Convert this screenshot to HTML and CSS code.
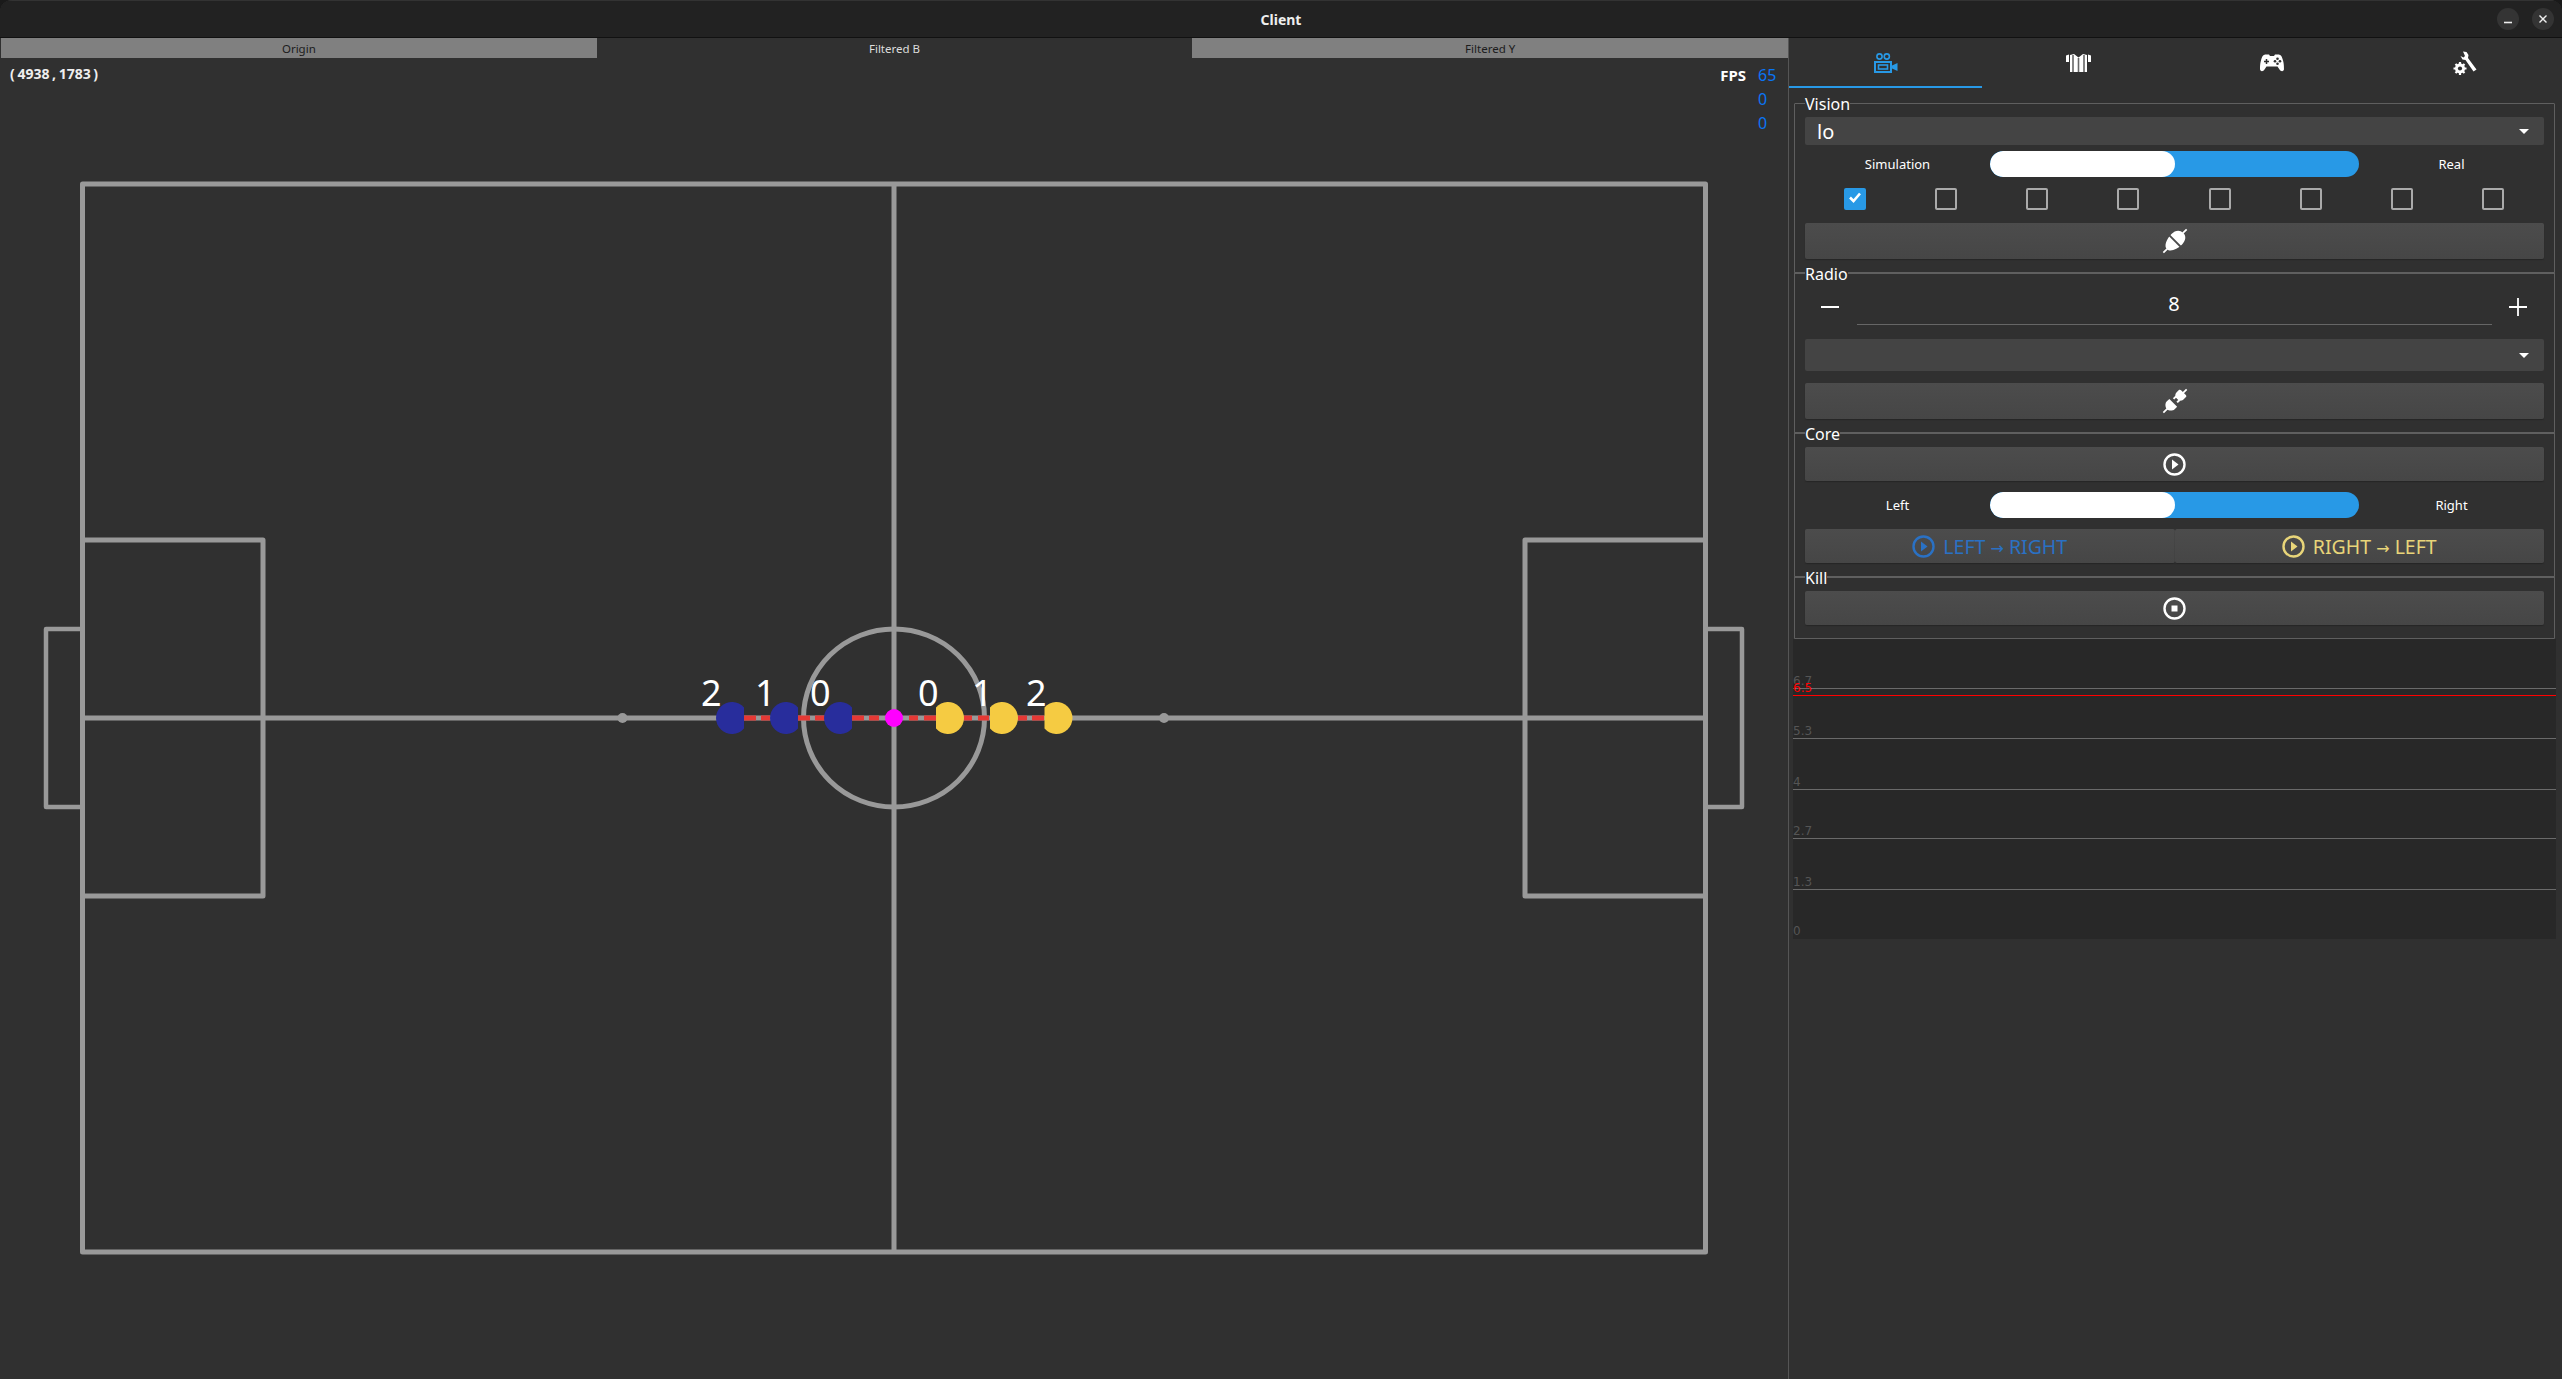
FILE: index.html
```html
<!DOCTYPE html>
<html lang="en">
<head>
<meta charset="utf-8">
<title>Client</title>
<link rel="stylesheet" href="styles.css">
</head>
<body>
<div class="window">
  <header class="titlebar">
    <span class="title">Client</span>
    <div class="win-buttons">
      <span class="win-btn"><svg width="22" height="22" viewBox="0 0 22 22"><path d="M7 14.500h8" stroke="#eee" stroke-width="1.600"/></svg></span>
      <span class="win-btn"><svg width="22" height="22" viewBox="0 0 22 22"><path d="M7.500 7.500l7 7M14.500 7.500l-7 7" stroke="#eee" stroke-width="1.400"/></svg></span>
    </div>
  </header>
  <div class="main">
    <section class="view">
      <nav class="view-tabs">
        <span class="view-tab">Origin</span>
        <span class="view-tab active">Filtered B</span>
        <span class="view-tab">Filtered Y</span>
      </nav>
      <div class="canvas">
        <svg class="field" width="1788" height="1321" viewBox="0 58 1788 1321">
          <g fill="none" stroke="#999" stroke-linejoin="round">
            <g stroke-width="5">
              <rect x="82.500" y="184" width="1623" height="1068"/>
              <path d="M894 184V1252M82 718H1706"/>
              <rect x="82.500" y="540" width="180.500" height="356"/>
              <rect x="1525" y="540" width="180.500" height="356"/>
              <ellipse cx="894" cy="718" rx="90.500" ry="89"/>
            </g>
            <path stroke-width="4.500" d="M82 629H46V807H82M1706 629H1742V807H1706"/>
          </g>
          <circle cx="622.500" cy="718" r="5" fill="#999"/>
          <circle cx="1164" cy="718" r="5" fill="#999"/>
          <path class="dash" d="M744 718h12M761 718h9M798 718h12M815 718h10M852 718h12M869 718h10M909 718h9M924 718h12M964 718h8M978 718h11M1018 718h9M1032 718h12"/>
          <g fill="#282d9c">
            <path d="M744 707.400A16 16 0 1 0 744 728.600Z"/>
            <path d="M798 707.400A16 16 0 1 0 798 728.600Z"/>
            <path d="M852 707.400A16 16 0 1 0 852 728.600Z"/>
          </g>
          <g fill="#f5cb42">
            <path d="M936 707.400A16 16 0 1 1 936 728.600Z"/>
            <path d="M990 707.400A16 16 0 1 1 990 728.600Z"/>
            <path d="M1044.500 707.400A16 16 0 1 1 1044.500 728.600Z"/>
          </g>
          <circle cx="894" cy="718" r="9" fill="#f0f"/>
          <g class="robot-id">
            <text x="701" y="706">2</text>
            <text x="755" y="706">1</text>
            <text x="810" y="706">0</text>
            <text x="918" y="706">0</text>
            <text x="972" y="706">1</text>
            <text x="1026" y="706">2</text>
          </g>
        </svg>
        <div class="coords">( 4938 , 1783 )</div>
        <div class="stats">
          <div class="stat-row"><span class="stat-label">FPS</span><span class="stat-value">65</span></div>
          <div class="stat-row"><span class="stat-value">0</span></div>
          <div class="stat-row"><span class="stat-value">0</span></div>
        </div>
      </div>
    </section>
    <aside class="panel">
      <nav class="panel-tabs">
        <span class="panel-tab active">
          <svg width="24" height="20" viewBox="0 0 24 20" fill="none" stroke="#2899e6"><circle cx="5.500" cy="3.500" r="2.600" stroke-width="1.600"/><circle cx="12.800" cy="3.500" r="2.600" stroke-width="1.600"/><rect x="1" y="9" width="16" height="10" stroke-width="2"/><rect x="4.500" y="12" width="9" height="4" stroke-width="1.600"/><path d="M18 12.500l5.500-2.500v8l-5.500-2.500z" fill="#2899e6" stroke="none"/></svg>
        </span>
        <span class="panel-tab">
          <svg width="25" height="18" viewBox="0 0 25 18"><path d="M0 1.500L3 .5v7.500H0zM25 1.500L22 .5v7.500h3z" fill="#fff"/><path d="M4 1l4-1 4.500 3.500L17 0l4 1v17H4z" fill="#fff"/><path d="M7 1v17M12.500 4v14M18 1v17" stroke="#666" stroke-width="1.600"/></svg>
        </span>
        <span class="panel-tab">
          <svg width="24" height="18" viewBox="0 0 24 18"><path d="M6 .5h3l1 1.500h4l1-1.500h3c3 0 4 2 5 6 1 3 1 7.500 1 8.500 0 2.500-3 3-4.500.5l-2-3H6.500l-2 3C3 18 0 17.500 0 15c0-1 0-5.500 1-8.500 1-4 2-6 5-6z" fill="#fff"/><path d="M6.500 5v5M4 7.500h5" stroke="#303030" stroke-width="1.500"/><g fill="#303030"><circle cx="17.500" cy="4.800" r="1.300"/><circle cx="17.500" cy="9.800" r="1.300"/><circle cx="15" cy="7.300" r="1.300"/><circle cx="20" cy="7.300" r="1.300"/></g></svg>
        </span>
        <span class="panel-tab">
          <svg width="24" height="24" viewBox="0 0 24 24"><path d="M10 .5l3.500.5 2 3-.5 3 8.500 11.500-3 2L12.500 9 9.500 8.500 7.500 5l3 1.500L12 5z" fill="#fff"/><g stroke="#fff" stroke-width="2.200"><path d="M7 11v13M.5 17.500h13M2.500 13l9 9M11.500 13l-9 9"/></g><circle cx="7" cy="17.500" r="5" fill="#fff"/><circle cx="7" cy="17.500" r="2.100" fill="#303030"/></svg>
        </span>
      </nav>
      <div class="groups">
        <section class="group group-vision">
          <span class="group-title">Vision</span>
          <div class="combo combo-small"><span>lo</span><i class="caret"></i></div>
          <div class="switch-row"><span class="switch-label">Simulation</span><span class="switch"><span class="knob"></span></span><span class="switch-label">Real</span></div>
          <div class="checks">
            <span class="check on"><svg width="18" height="18" viewBox="0 0 18 18"><path d="M4 9.500l3.500 3.500L14 5.500" fill="none" stroke="#fff" stroke-width="2.600"/></svg></span>
            <span class="check"></span><span class="check"></span><span class="check"></span><span class="check"></span><span class="check"></span><span class="check"></span><span class="check"></span>
          </div>
          <button class="btn btn-tall btn-vision">
            <svg width="24" height="24" viewBox="0 0 24 24"><g transform="rotate(45 12 12)"><path d="M12 -4.500V1M12 23v5.500" stroke="#fff" stroke-width="1.700"/><path d="M12 .5c5 0 7.500 4 7.500 9 0 7-3 14-7.500 14s-7.500-7-7.500-14c0-5 2.500-9 7.500-9z" fill="#fff"/><path d="M3 12h18" stroke="#4a4a4a" stroke-width="2"/></g></svg>
          </button>
        </section>
        <section class="group group-radio">
          <span class="group-title">Radio</span>
          <div class="spin">
            <svg class="spin-btn" width="18" height="18" viewBox="0 0 18 18"><path d="M0 9h18" stroke="#fff" stroke-width="2"/></svg>
            <span class="spin-value">8</span>
            <svg class="spin-btn" width="18" height="18" viewBox="0 0 18 18"><path d="M0 9h18M9 0v18" stroke="#fff" stroke-width="1.800"/></svg>
          </div>
          <div class="combo combo-large"><span></span><i class="caret"></i></div>
          <button class="btn btn-tall btn-radio">
            <svg width="24" height="24" viewBox="0 0 24 24"><g transform="rotate(45 12 12)" fill="#fff"><path d="M12 -4.500V2M12 22v6.500" stroke="#fff" stroke-width="1.700"/><path d="M7 1.500c0-1 1-1.500 2-1.500h6c1 0 2 .5 2 1.500V5c0 2-2 4-3 4h-4c-1 0-3-2-3-4z"/><path d="M9.500 8v3.500M14.500 8v3.500" stroke="#fff" stroke-width="2"/><path d="M6.500 14.500h11V18c0 3-3 5.500-5.500 5.500S6.500 21 6.500 18z"/></g></svg>
          </button>
        </section>
        <section class="group group-core">
          <span class="group-title">Core</span>
          <button class="btn btn-mid">
            <svg width="23" height="23" viewBox="0 0 23 23"><circle cx="11.500" cy="11.500" r="10" fill="none" stroke="#fff" stroke-width="2.400"/><path d="M9 6.500l6.500 5-6.500 5z" fill="#fff"/></svg>
          </button>
          <div class="switch-row"><span class="switch-label">Left</span><span class="switch"><span class="knob"></span></span><span class="switch-label">Right</span></div>
          <div class="btn-pair">
            <button class="btn btn-mid btn-blue">
              <svg width="23" height="23" viewBox="0 0 23 23"><circle cx="11.500" cy="11.500" r="10" fill="none" stroke="currentColor" stroke-width="2.400"/><path d="M9 6.500l6.500 5-6.500 5z" fill="currentColor"/></svg>
              <span>LEFT <span class="arrow">→</span> RIGHT</span>
            </button>
            <button class="btn btn-mid btn-yellow">
              <svg width="23" height="23" viewBox="0 0 23 23"><circle cx="11.500" cy="11.500" r="10" fill="none" stroke="currentColor" stroke-width="2.400"/><path d="M9 6.500l6.500 5-6.500 5z" fill="currentColor"/></svg>
              <span>RIGHT <span class="arrow">→</span> LEFT</span>
            </button>
          </div>
        </section>
        <section class="group group-kill">
          <span class="group-title">Kill</span>
          <button class="btn btn-mid">
            <svg width="23" height="23" viewBox="0 0 23 23"><circle cx="11.500" cy="11.500" r="10" fill="none" stroke="#fff" stroke-width="2.400"/><rect x="8.500" y="8.500" width="6" height="6" fill="#fff"/></svg>
          </button>
        </section>
      </div>
      <div class="chart">
        <div class="tick tick-1"><span>6.7</span></div>
        <div class="limit"><span>6.5</span></div>
        <div class="tick tick-2"><span>5.3</span></div>
        <div class="tick tick-3"><span>4</span></div>
        <div class="tick tick-4"><span>2.7</span></div>
        <div class="tick tick-5"><span>1.3</span></div>
        <div class="tick tick-6"><span>0</span></div>
      </div>
    </aside>
  </div>
</div>
</body>
</html>
```
FILE: styles.css
```css
* { box-sizing: border-box; }
html, body { margin: 0; height: 100%; background: #1a1a1a; overflow: hidden; }
body { font-family: "Noto Sans", sans-serif; color: #fff; }

.window { width: 2562px; height: 1379px; display: flex; flex-direction: column; border-radius: 12px 12px 0 0; overflow: hidden; background: #303030; }

.titlebar { position: relative; flex: 0 0 38px; display: flex; align-items: center; justify-content: center; background: #222; border-top: 1px solid #333; border-bottom: 1px solid #111; }
.title { font-size: 14px; font-weight: 700; color: #eee; }
.win-buttons { position: absolute; right: 8px; top: 7px; display: flex; gap: 13px; }
.win-btn { width: 22px; height: 22px; border-radius: 50%; background: #343434; display: flex; }

.main { flex: 1; display: flex; min-height: 0; }

.view { flex: 0 0 1788px; display: flex; flex-direction: column; }
.view-tabs { flex: 0 0 20px; display: flex; padding-left: 1px; }
.view-tab { flex: 1; display: flex; align-items: center; justify-content: center; background: #808080; color: #1c1c1c; font-size: 11.500px; }
.view-tab.active { background: #303030; color: #ddd; }
.canvas { position: relative; flex: 1; }
.field { display: block; }
.dash { fill: none; stroke: #e53935; stroke-width: 5; }
.robot-id text { fill: #fff; font-family: "Noto Sans", sans-serif; font-size: 36px; }

.coords { position: absolute; left: 10px; top: 6px; font-size: 14px; font-weight: 700; word-spacing: -1px; color: #eee; }
.stats { position: absolute; right: 12px; top: 8px; display: flex; flex-direction: column; gap: 5px; font-size: 16px; line-height: 19px; }
.stat-row { display: flex; justify-content: flex-end; gap: 12px; }
.stat-label { font-weight: 700; font-size: 15px; }
.stat-value { color: #0a75f5; width: 18px; }

.panel { flex: 1; display: flex; flex-direction: column; border-left: 1px solid #555; }
.panel-tabs { flex: 0 0 50px; display: flex; }
.panel-tab { flex: 1; display: flex; align-items: center; justify-content: center; padding-top: 2px; border-bottom: 2px solid transparent; }
.panel-tab.active { border-bottom-color: #2899e6; }

.groups { margin: 15px 7px 0 5px; display: flex; flex-direction: column; }
.group { position: relative; border: 1px solid #5f5f5f; border-radius: 1px; padding: 13px 10px 0; display: flex; flex-direction: column; }
.group + .group { margin-top: -1px; border-top-width: 2px; }
.group-title { position: absolute; left: 10px; top: -10px; font-size: 16px; line-height: 20px; background: #303030; }
.group-vision { height: 170px; }
.group-radio { height: 161px; }
.group-core { height: 145px; }
.group-kill { height: 63px; }

.combo { display: flex; align-items: center; justify-content: space-between; background: #444; border-radius: 2px; padding: 0 15px 0 12px; font-size: 20px; }
.combo-small { height: 28px; }
.combo-large { height: 32px; margin-top: 14px; }
.caret { width: 0; height: 0; border-left: 5px solid transparent; border-right: 5px solid transparent; border-top: 5px solid #fff; }

.switch-row { display: flex; align-items: center; height: 26px; margin-top: 6px; }
.switch-label { flex: 1; text-align: center; font-size: 13px; }
.switch { flex: 0 0 369px; height: 26px; border-radius: 13px; background: #2899e6; overflow: hidden; }
.knob { display: block; width: 185px; height: 26px; border-radius: 13px; background: #fff; }

.checks { display: flex; margin-top: 11px; padding: 0 5px 0 4px; }
.check { flex: 1; height: 18px; position: relative; display: flex; justify-content: center; }
.check::before { content: ""; width: 18px; height: 18px; border: 2px solid #aaa; border-radius: 2px; }
.check.on::before { background: #2899e6; border-color: #2899e6; }
.check svg { position: absolute; left: 50%; margin-left: -9px; }

.btn { display: flex; align-items: center; justify-content: center; gap: 8px; width: 100%; border: 0; padding: 0; border-radius: 2px; background: linear-gradient(#4c4c4c, #464646); box-shadow: 0 1px 1px #262626; font-family: inherit; color: #fff; }
.btn svg { overflow: visible; flex: none; }
.btn-tall { height: 36px; }
.btn-mid { height: 34px; }
.btn-vision { margin-top: 17px; }
.btn-radio { margin-top: 12px; }
.btn-pair { display: flex; margin-top: 11px; }
.btn-blue { color: #2a71c4; font-size: 19.500px; }
.btn-yellow { color: #e8d579; font-size: 19.500px; }
.arrow { font-family: "DejaVu Sans", sans-serif; font-size: 16px; }
.group-core .switch-row { margin-top: 11px; }

.spin { display: flex; align-items: center; justify-content: space-between; height: 34px; padding: 0 17px 0 16px; margin-top: 4px; }
.spin-btn { flex: none; margin-bottom: 2px; }
.spin-value { flex: 0 0 635px; height: 34px; line-height: 26px; text-align: center; font-size: 20px; border-bottom: 1px solid #666; }

.chart { position: relative; margin: 0 0 0 4px; width: 763px; height: 300px; background: #282828; font-family: "DejaVu Sans", sans-serif; font-size: 12px; color: #555; }
.tick, .limit { position: absolute; left: 0; right: 0; height: 1px; background: #6a6a6a; }
.tick span, .limit span { position: absolute; left: 0; bottom: 0; line-height: 15px; }
.limit { background: #f00; top: 56px; color: #f00; }
.limit span { top: -14px; bottom: auto; }
.tick-1 { top: 49px; }
.tick-2 { top: 99px; }
.tick-3 { top: 150px; }
.tick-4 { top: 199px; }
.tick-5 { top: 250px; }
.tick-6 { top: 299px; background: none; }
```
